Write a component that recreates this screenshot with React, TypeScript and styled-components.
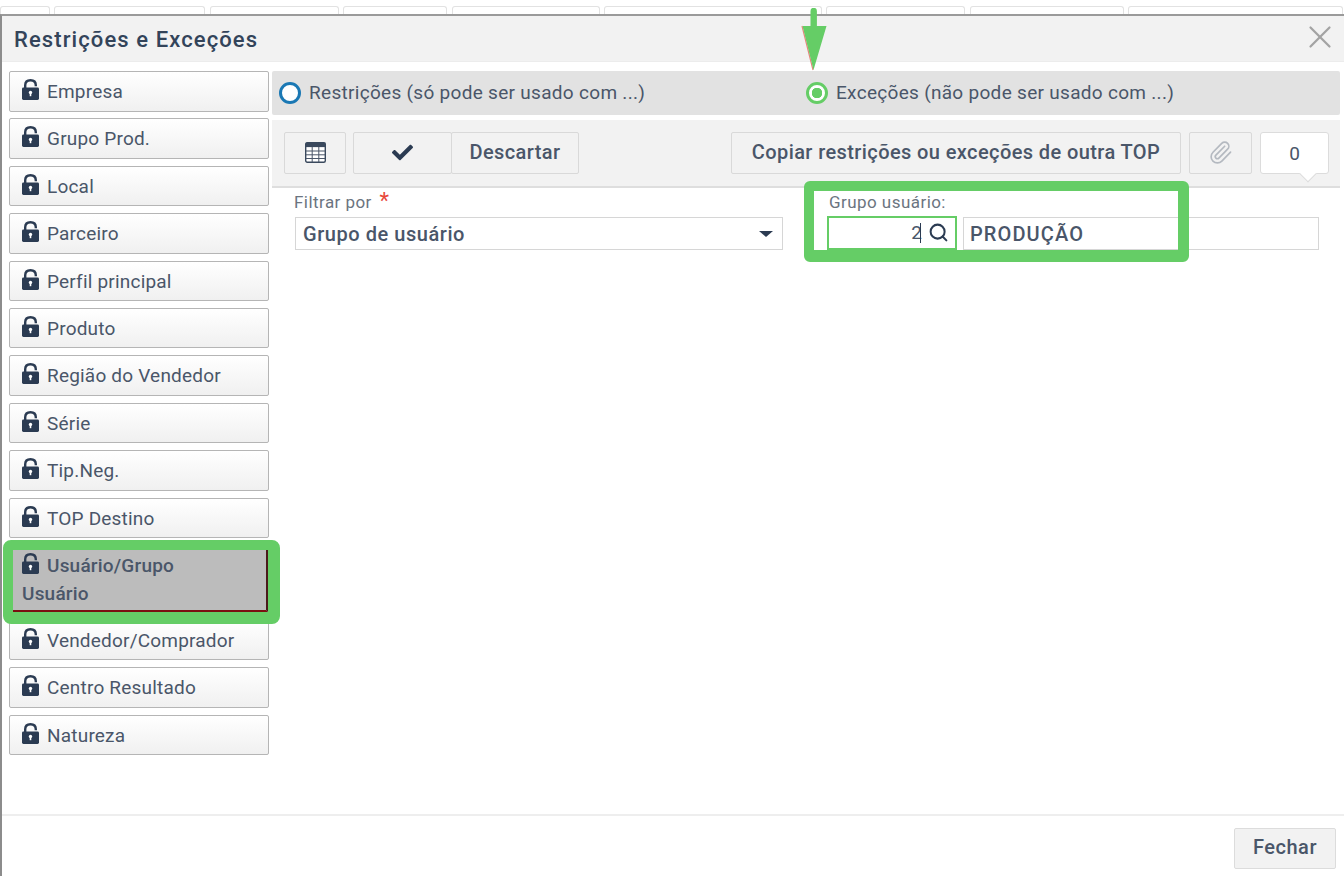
import React from 'react';
import styled, { createGlobalStyle } from 'styled-components';
import { Paperclip, Search, X } from 'lucide-react';
import { FaCheck } from 'react-icons/fa';

const menuItems = [
  'Empresa',
  'Grupo Prod.',
  'Local',
  'Parceiro',
  'Perfil principal',
  'Produto',
  'Região do Vendedor',
  'Série',
  'Tip.Neg.',
  'TOP Destino',
  'Usuário/Grupo Usuário',
  'Vendedor/Comprador',
  'Centro Resultado',
  'Natureza',
];

const backTabs = [50, 151, 129, 104, 148, 218, 139, 154, 215];

const LockIcon = () => (
  <LockSvg viewBox="0 0 17 21" aria-hidden="true">
    <path d="M3.2 10V6.2C3.2 3 5.4 1.2 8.5 1.2s5.3 1.8 5.3 5v1" fill="none" stroke="#2b3b52" strokeWidth="2.4" />
    <rect x="0" y="8.5" width="17" height="12.5" rx="1.4" fill="#2b3b52" />
    <circle cx="8.5" cy="13.4" r="1.7" fill="#fff" />
    <rect x="7.7" y="13.6" width="1.6" height="3.6" fill="#fff" />
  </LockSvg>
);

const TableIcon = () => (
  <svg width="21" height="21" viewBox="0 0 21 21" aria-hidden="true">
    <rect x="0.7" y="0.7" width="19.6" height="19.6" rx="1.5" fill="#fff" stroke="#3a495d" strokeWidth="1.4" />
    <rect x="0.7" y="0.7" width="19.6" height="4.4" fill="#3a495d" />
    <path d="M1 9h19M1 12.8h19M1 16.5h19M7.2 5v15M13.8 5v15" stroke="#4a5669" strokeWidth="1" />
  </svg>
);

const App: React.FC = () => {
  return (
    <>
      <GlobalStyle />
      <Page>
        <TabStrip>
          {backTabs.map((w, i) => (
            <BackTab key={i} $width={w} />
          ))}
        </TabStrip>
        <Dialog>
          <Header>
            <Title>Restrições e Exceções</Title>
            <CloseIcon size={38} strokeWidth={1.4} />
          </Header>
          <Body>
            <Sidebar>
              {menuItems.map((item) => (
                <MenuButton key={item} $active={item.startsWith('Usuário')}>
                  <LockIcon />
                  {item}
                </MenuButton>
              ))}
            </Sidebar>
            <Content>
              <RadioBar>
                <RadioOption $width={527}>
                  <Radio />
                  <RadioText>Restrições (só pode ser usado com ...)</RadioText>
                </RadioOption>
                <RadioOption>
                  <Radio $checked />
                  <RadioText>Exceções (não pode ser usado com ...)</RadioText>
                </RadioOption>
              </RadioBar>
              <Toolbar>
                <ToolButton $width={62}>
                  <TableIcon />
                </ToolButton>
                <ButtonGroup>
                  <ToolButton $width={99}>
                    <FaCheck size={21} color="#2b3b52" />
                  </ToolButton>
                  <ToolButton $width={128}>Descartar</ToolButton>
                </ButtonGroup>
                <ToolbarRight>
                  <ToolButton $width={450}>Copiar restrições ou exceções de outra TOP</ToolButton>
                  <ToolButton $width={63}>
                    <Paperclip size={25} strokeWidth={1.6} color="#b4b9c0" />
                  </ToolButton>
                  <CountBubble>0</CountBubble>
                </ToolbarRight>
              </Toolbar>
              <Form>
                <Field $width={488}>
                  <FieldLabel $indent={-1}>
                    Filtrar por <Required>*</Required>
                  </FieldLabel>
                  <SelectBox>
                    Grupo de usuário
                    <Caret />
                  </SelectBox>
                </Field>
                <Field>
                  <FieldLabel $indent={2}>Grupo usuário:</FieldLabel>
                  <InputRow>
                    <CodeInput>
                      <CodeValue>2</CodeValue>
                      <Search size={21} strokeWidth={2.3} color="#2b3b52" />
                    </CodeInput>
                    <DescriptionInput>PRODUÇÃO</DescriptionInput>
                  </InputRow>
                </Field>
              </Form>
            </Content>
          </Body>
          <Footer>
            <CloseButton>Fechar</CloseButton>
          </Footer>
        </Dialog>

        <SidebarHighlight />
        <FieldHighlight />
        <ArrowMark viewBox="0 0 26 64" aria-hidden="true">
          <path d="M1 18L12 62" stroke="#e8837c" strokeWidth="1.2" fill="none" />
          <path d="M9.5 3a3.2 3.2 0 0 1 6.4 0V18h9.6L12.5 62 1.5 18h8z" fill="#65cd66" />
        </ArrowMark>
      </Page>
    </>
  );
};

const GlobalStyle = createGlobalStyle`
  html, body {
    margin: 0;
    padding: 0;
    background: #fff;
  }
  * {
    box-sizing: border-box;
  }
`;

const Page = styled.div`
  position: relative;
  width: 1344px;
  height: 876px;
  overflow: hidden;
  background: #fff;
  font-family: Roboto, 'Liberation Sans', sans-serif;
  color: #4a5669;
`;

const TabStrip = styled.div`
  display: flex;
  align-items: flex-end;
  gap: 4.4px;
  height: 14px;
`;

const BackTab = styled.div<{ $width: number }>`
  flex: 0 0 ${(p) => p.$width}px;
  height: 8px;
  border: 1px solid #e2e2e2;
  border-bottom: none;
  border-radius: 3px 3px 0 0;
`;

const Dialog = styled.div`
  display: flex;
  flex-direction: column;
  height: 862px;
  border-top: 2px solid #9a9a9a;
  border-left: 2px solid #8c8c8c;
`;

const Header = styled.div`
  display: flex;
  align-items: center;
  justify-content: space-between;
  flex: 0 0 46px;
  padding: 0 5px 0 12px;
  background: #f2f2f2;
  border-bottom: 1px solid #ececec;
`;

const Title = styled.div`
  padding-top: 2px;
  font-size: 22px;
  font-weight: 500;
  letter-spacing: 1.1px;
  color: #33445a;
`;

const CloseIcon = styled(X)`
  margin: -8px 0 -6px;
  position: relative;
  top: -1px;
  color: #a3a3a3;
`;

const Body = styled.div`
  flex: 1;
  display: flex;
  min-height: 0;
`;

const Sidebar = styled.div`
  flex: 0 0 270px;
  display: flex;
  flex-direction: column;
  gap: 6.9px;
  padding: 9px 0 0 7px;
`;

const LockSvg = styled.svg`
  width: 17px;
  height: 21px;
  margin-right: 8px;
  vertical-align: -2px;
`;

const MenuButton = styled.div<{ $active?: boolean }>`
  flex: 0 0 ${(p) => (p.$active ? '68px' : '40.5px')};
  width: 260px;
  padding: 6px ${(p) => (p.$active ? '40px' : '6px')} 0 12px;
  font-size: 19px;
  line-height: 28px;
  letter-spacing: 0.2px;
  font-weight: ${(p) => (p.$active ? 500 : 400)};
  border: 1px solid #b5b5b5;
  border-radius: 2px;
  background: ${(p) => (p.$active ? '#bcbcbc' : 'linear-gradient(#ffffff, #f0f0f0)')};
  ${(p) => p.$active && 'border-right: 3px solid #4a1a1a; border-bottom: 3px solid #7a1010;'}
`;

const Content = styled.div`
  width: 1068px;
  margin-top: 9px;
  display: flex;
  flex-direction: column;
`;

const RadioBar = styled.div`
  display: flex;
  align-items: center;
  height: 44px;
  padding-left: 7px;
  background: #e2e2e2;
  border-radius: 2px;
  font-size: 19px;
  letter-spacing: 0.3px;
`;

const RadioOption = styled.div<{ $width?: number }>`
  display: flex;
  align-items: center;
  gap: 8px;
  ${(p) => p.$width && `width: ${p.$width}px;`}
`;

const RadioText = styled.span`
  margin-top: -2px;
`;

const Radio = styled.span<{ $checked?: boolean }>`
  width: 22px;
  height: 22px;
  border-radius: 50%;
  border: 3px solid ${(p) => (p.$checked ? '#65cd66' : '#1a78b4')};
  background: ${(p) => (p.$checked ? 'radial-gradient(circle, #65cd66 0 5px, #fff 5.5px)' : '#fff')};
`;

const Toolbar = styled.div`
  display: flex;
  align-items: center;
  gap: 7px;
  height: 68px;
  margin-top: 5px;
  padding: 0 11px 0 12px;
  background: #f2f2f2;
  border-bottom: 2px solid #dedede;
`;

const ToolbarRight = styled.div`
  display: flex;
  align-items: center;
  gap: 8px;
  margin-left: auto;
`;

const ToolButton = styled.div<{ $width: number }>`
  display: flex;
  align-items: center;
  justify-content: center;
  width: ${(p) => p.$width}px;
  height: 42px;
  padding-bottom: 2px;
  background: #f2f2f2;
  border: 1px solid #d9d9d9;
  border-radius: 2px;
  font-size: 20px;
  font-weight: 500;
  letter-spacing: 0.4px;
  white-space: nowrap;
`;

const ButtonGroup = styled.div`
  display: flex;
  & > * + * {
    margin-left: -1px;
  }
`;

const CountBubble = styled.div`
  position: relative;
  display: flex;
  align-items: center;
  justify-content: center;
  width: 69px;
  height: 42px;
  background: #fff;
  border: 1px solid #dcdcdc;
  border-radius: 3px;
  font-size: 19px;

  &::after {
    content: '';
    position: absolute;
    right: 14px;
    bottom: -7px;
    width: 11px;
    height: 11px;
    background: #fff;
    border-right: 1px solid #dcdcdc;
    border-bottom: 1px solid #dcdcdc;
    transform: rotate(45deg);
  }
`;

const Form = styled.div`
  display: flex;
  gap: 44px;
  padding: 5px 0 0 23px;
`;

const Field = styled.div<{ $width?: number }>`
  ${(p) => p.$width && `width: ${p.$width}px;`}
  display: flex;
  flex-direction: column;
`;

const FieldLabel = styled.div<{ $indent: number }>`
  height: 24px;
  margin-left: ${(p) => p.$indent}px;
  font-size: 17px;
  line-height: 19px;
  letter-spacing: 0.45px;
  color: #6b7480;
  white-space: nowrap;
`;

const Required = styled.span`
  margin-left: 3px;
  font-size: 22px;
  line-height: 0;
  color: #e8483a;
`;

const SelectBox = styled.div`
  position: relative;
  display: flex;
  align-items: center;
  height: 33px;
  padding-left: 7px;
  border: 1px solid #d6d6d6;
  font-size: 20px;
  font-weight: 500;
  letter-spacing: 0.55px;
`;

const Caret = styled.span`
  position: absolute;
  right: 9px;
  top: 13px;
  border-left: 7px solid transparent;
  border-right: 7px solid transparent;
  border-top: 6px solid #2b3b52;
`;

const InputRow = styled.div`
  display: flex;
  gap: 6px;
`;

const CodeInput = styled.div`
  display: flex;
  align-items: center;
  justify-content: flex-end;
  gap: 6px;
  width: 130px;
  height: 34px;
  margin-top: -1px;
  padding: 0 6px 1px 0;
  border: 2px solid #65cd66;
  font-size: 19px;
`;

const CodeValue = styled.span`
  position: relative;

  &::after {
    content: '';
    position: absolute;
    right: 1px;
    top: 2px;
    width: 1.5px;
    height: 20px;
    background: #2b3b52;
  }
`;

const DescriptionInput = styled.div`
  display: flex;
  align-items: center;
  width: 356px;
  height: 33px;
  padding-left: 6px;
  border: 1px solid #d6d6d6;
  font-size: 20px;
  font-weight: 500;
  letter-spacing: 1.1px;
`;

const Footer = styled.div`
  display: flex;
  justify-content: flex-end;
  align-items: flex-start;
  flex: 0 0 62px;
  padding: 12px 8px 0 0;
  border-top: 2px solid #eeeeee;
`;

const CloseButton = styled.div`
  display: flex;
  align-items: center;
  justify-content: center;
  width: 102px;
  height: 41px;
  padding-bottom: 3px;
  background: #f2f2f2;
  border: 1px solid #dcdcdc;
  border-radius: 2px;
  font-size: 20px;
  font-weight: 500;
  letter-spacing: 0.5px;
`;

const SidebarHighlight = styled.div`
  position: absolute;
  left: 3px;
  top: 540px;
  width: 277px;
  height: 84px;
  border: solid #65cd66;
  border-width: 10px 12px 12px 10px;
  border-radius: 8px;
`;

const FieldHighlight = styled.div`
  position: absolute;
  left: 804px;
  top: 181px;
  width: 385px;
  height: 81px;
  border: solid #65cd66;
  border-width: 10px 11px 12px 10px;
  border-radius: 6px;
`;

const ArrowMark = styled.svg`
  position: absolute;
  left: 801px;
  top: 8px;
  width: 26px;
  height: 64px;
`;

export default App;
